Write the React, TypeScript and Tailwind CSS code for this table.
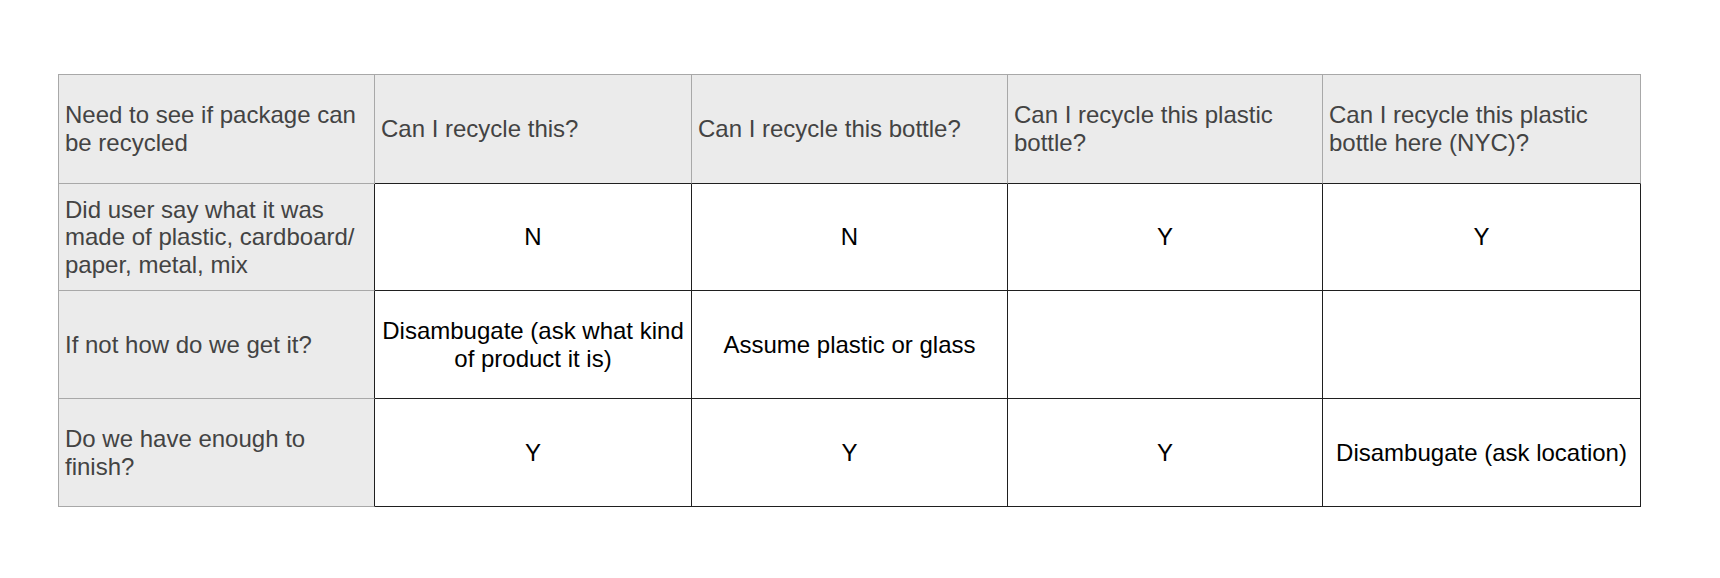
const headers = [
  "Need to see if package can be recycled",
  "Can I recycle this?",
  "Can I recycle this bottle?",
  "Can I recycle this plastic bottle?",
  "Can I recycle this plastic bottle here (NYC)?",
];

const rows = [
  {
    label: "Did user say what it was made of plastic, cardboard/ paper, metal, mix",
    cells: ["N", "N", "Y", "Y"],
  },
  {
    label: "If not how do we get it?",
    cells: ["Disambugate (ask what kind of product it is)", "Assume plastic or glass", "", ""],
  },
  {
    label: "Do we have enough to finish?",
    cells: ["Y", "Y", "Y", "Disambugate (ask location)"],
  },
];

const App = () => {
  return (
    <div className="min-h-[578px] w-[1720px] bg-white pt-[74px] pl-[58px] font-['Liberation_Sans',Arial,sans-serif] text-[24px] leading-[1.15]">
      <div className="grid w-fit grid-cols-[316px_317px_316px_315px_318px] grid-rows-[109px_107px_108px_108px] border-t border-l border-[#a8a8a8]">
        {headers.map((h, i) => (
          <div
            key={h}
            className={`flex items-center bg-[#ebebeb] px-[6px] text-[#434343] border-r border-r-[#a8a8a8] border-b ${
              i === 0 ? "border-b-[#a8a8a8]" : "border-b-[#1f1f1f]"
            }`}
          >
            {h}
          </div>
        ))}
        {rows.map((r, ri) => (
          <div key={ri} className="contents">
            <div className="flex items-center bg-[#ebebeb] px-[6px] text-[#434343] border-r border-r-[#1f1f1f] border-b border-b-[#a8a8a8]">
              {r.label}
            </div>
            {r.cells.map((c, ci) => (
              <div
                key={ci}
                className="flex items-center justify-center bg-white px-[4px] text-center text-black border-r border-b border-[#1f1f1f]"
              >
                {c}
              </div>
            ))}
          </div>
        ))}
      </div>
    </div>
  );
};

export default App;
